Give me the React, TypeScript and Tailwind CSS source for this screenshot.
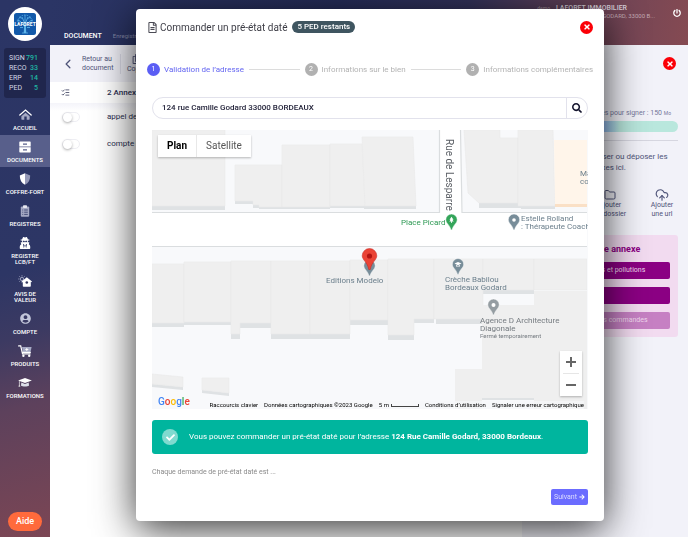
import type { ReactNode } from 'react'
import {
    FaArrowRight,
    FaCheck,
    FaPowerOff,
    FaRegCopy,
    FaRegFileAlt,
    FaSearch,
    FaTimes,
    FaUserCircle,
    FaUserSecret,
} from 'react-icons/fa'
import { ChevronLeft, CloudUpload, File, Folder, ListChecks } from 'lucide-react'

const stats = [
    { label: 'SIGN', value: 791 },
    { label: 'RECO', value: 33 },
    { label: 'ERP', value: 14 },
    { label: 'PED', value: 5 },
]

const menu: { label: string; icon: ReactNode; active?: boolean }[] = [
    { label: 'Accueil', icon: <HomeIcon /> },
    { label: 'Documents', icon: <DrawerIcon />, active: true },
    { label: 'Coffre-fort', icon: <ShieldIcon /> },
    { label: 'Registres', icon: <ClipboardIcon /> },
    { label: 'Registre LCB/FT', icon: <FaUserSecret className="size-3" /> },
    { label: 'Avis de valeur', icon: <HouseDayIcon /> },
    { label: 'Compte', icon: <FaUserCircle className="size-[11px] text-[#c3c6da]" /> },
    { label: 'Produits', icon: <CartIcon /> },
    { label: 'Formations', icon: <GraduationIcon /> },
]

const steps = ['Validation de l’adresse', 'Informations sur le bien', 'Informations complémentaires']

export default function App() {
    return (
        <div className="flex min-h-screen bg-white font-['Roboto',sans-serif] text-[#2b3052]">
            <Sidebar />
            <div className="flex min-w-0 flex-1 flex-col">
                <Header />
                <div className="flex flex-1">
                    <Annexes />
                    <UploadPanel />
                </div>
            </div>
            <OrderDialog />
        </div>
    )
}

function Sidebar() {
    return (
        <nav className="flex w-[50px] shrink-0 flex-col items-center bg-[linear-gradient(165deg,#2b3565_0%,#2d3665_50%,#3c3a62_62%,#5d415c_75%,#7c4654_100%)] pt-[7px] text-white">
            <Logo />
            <dl className="mt-[7px] w-[42px] rounded-[3px] bg-[#20264d] py-[5px] pr-2 pl-[5px] text-[7px] leading-[10px]">
                {stats.map((s) => (
                    <div key={s.label} className="flex justify-between">
                        <dt className="text-[#d5d7e5]">{s.label}</dt>
                        <dd className="font-medium text-[#1fb5a2]">{s.value}</dd>
                    </div>
                ))}
            </dl>
            <ul className="mt-[5px] w-full">
                {menu.map((item) => (
                    <li key={item.label}>
                        <a
                            href="#"
                            className={
                                'flex flex-col items-center gap-1 px-1 pt-[5px] pb-1 text-center text-[6px] leading-[6px] font-medium uppercase ' +
                                (item.active ? 'bg-[#585f8b]' : '')
                            }
                        >
                            <span className="flex h-[13px] items-center">{item.icon}</span>
                            <span className={item.label.includes(' ') ? 'w-8' : ''}>{item.label}</span>
                        </a>
                    </li>
                ))}
            </ul>
            <button className="mt-auto mb-[6px] h-[19px] w-[34px] rounded-full bg-[#ff6a3c] text-[9px] font-medium">
                Aide
            </button>
        </nav>
    )
}

function Header() {
    return (
        <header className="flex h-[45px] shrink-0 justify-between bg-[linear-gradient(100deg,#2b3565_0%,#262d5a_45%,#33335c_65%,#6d4458_84%,#854a52_100%)] pr-[7px] pl-[14px] text-white">
            <div className="flex items-end gap-[11px] pb-1">
                <h1 className="text-[7px] leading-[10px] font-medium">DOCUMENT</h1>
                <span className="text-[6px] leading-[10px] text-[#8286a5]">Enregistré</span>
            </div>
            <div className="flex gap-[18px] pt-[5px]">
                <div className="text-right text-[7px] leading-[7px]">
                    <p className="pr-7 font-medium text-[#d9d3dd]">
                        <span className="mr-[6px] text-[5px] text-[#9c8796]">demo</span>
                        LAFORET IMMOBILIER
                    </p>
                    <p className="text-[6px] text-[#c3a9b3]">124 RUE CAMILLE GODARD, 33000 B...</p>
                </div>
                <button aria-label="Déconnexion" className="h-4">
                    <FaPowerOff className="size-2" />
                </button>
            </div>
        </header>
    )
}

function Annexes() {
    return (
        <main className="min-w-0 flex-1">
            <div className="flex h-[37px] items-center bg-[#f2f2f9] pl-3 text-[7px] leading-[9px] text-[#50557a]">
                <a href="#" className="flex items-center gap-2">
                    <ChevronLeft className="size-3 scale-125" strokeWidth={2} />
                    <span className="w-8">Retour au document</span>
                </a>
                <div className="mx-[6px] h-5 w-px bg-[#dcdce8]" />
                <button className="flex flex-col items-center gap-px">
                    <FaRegCopy className="size-[10px]" />
                    Copier
                </button>
            </div>
            <div className="flex h-[21px] items-center gap-[37px] pl-[11px]">
                <ListChecks className="size-[9px]" />
                <h2 className="text-[8px] font-medium">2 Annexes</h2>
            </div>
            <ul className="bg-linear-to-b from-[#f4f4fa] to-white to-15% text-[8px]">
                <AnnexRow label="appel de charges" />
                <AnnexRow label="compte rendu" />
            </ul>
        </main>
    )
}

function AnnexRow({ label }: { label: string }) {
    return (
        <li className="h-[27px] pl-3">
            <label className="flex h-full items-center gap-[27px]">
                <span className="flex h-[10px] w-[18px] rounded-full border border-[#eeeef3] bg-white">
                    <input
                        type="checkbox"
                        className="size-[9px] appearance-none rounded-full bg-white shadow-[0_1px_3px_#0005]"
                    />
                </span>
                {label}
            </label>
        </li>
    )
}

function UploadPanel() {
    return (
        <aside className="w-[166px] shrink-0 bg-[#f2f2f9] pt-3 pl-[10px] text-[#50557a]">
            <div className="flex justify-end pr-3">
                <CloseButton />
            </div>
            <p className="mt-[39px] pr-[17px] text-right text-[7px] leading-2 whitespace-nowrap text-[#74789a]">
                Taille des annexes pour signer : 150 <small className="text-[5px]">Mo</small>
            </p>
            <div className="pr-[10px]">
                <div className="mt-1 h-[11px] rounded-full bg-linear-to-r from-[#8fb3ff] from-45% to-[#b9e7dd] to-60%" />
                <hr className="mt-2 border-[#d6d6e0]" />
                <p className="mt-[10px] text-center text-[8px] leading-[11px]">
                    Vous pouvez glisser ou déposer les annexes ici.
                </p>
            </div>
            <div className="mt-[15px] grid grid-cols-3 text-[7px] leading-[9px]">
                <UploadButton icon={<File className="size-3" strokeWidth={1.5} />} target="un fichier" />
                <UploadButton icon={<Folder className="size-3" strokeWidth={2} />} target="un dossier" />
                <UploadButton icon={<CloudUpload className="size-[14px]" strokeWidth={2} />} target="une url" />
            </div>
            <section className="mt-4 mr-[10px] rounded-[3px] bg-[#f2dbf0] px-2 pt-[9px] pb-2 text-center">
                <h2 className="text-[9px] leading-[11px] font-bold text-[#8b0083]">Créer une annexe</h2>
                <div className="mt-[7px] flex flex-col gap-2 text-[7px] text-[#f0d9ef]">
                    <button className="h-[17px] rounded-xs bg-[#8b0083]">Etats risques et pollutions</button>
                    <button aria-label="Pré-état daté" className="h-[17px] rounded-xs bg-[#8b0083]" />
                    <button className="h-[17px] rounded-xs bg-[#c680c3]">Voir toutes les commandes</button>
                </div>
            </section>
        </aside>
    )
}

function UploadButton({ icon, target }: { icon: ReactNode; target: string }) {
    return (
        <button className="flex flex-col items-center">
            <span className="flex h-[13px] items-center">{icon}</span>
            <span className="whitespace-nowrap">
                Ajouter
                <br />
                {target}
            </span>
        </button>
    )
}

function CloseButton() {
    return (
        <button
            aria-label="Fermer"
            className="flex size-[13px] items-center justify-center rounded-full bg-[#fb0007] text-white"
        >
            <FaTimes className="size-[8px]" />
        </button>
    )
}

function OrderDialog() {
    return (
        <div className="fixed inset-y-0 right-0 left-[52px] flex items-start justify-center pt-[9px]">
            <div
                role="dialog"
                aria-labelledby="order-title"
                className="w-full max-w-[468px] rounded-[4px] bg-white pt-[11px] pb-4 shadow-[0_8px_40px_rgba(0,0,0,0.8)]"
            >
                <div className="flex h-[14px] items-center px-[11px]">
                    <FaRegFileAlt className="size-[11px] text-[#4b4b55]" />
                    <h2 id="order-title" className="ml-[2px] text-[10px] text-[#3d3d46]">
                        Commander un pré-état daté
                    </h2>
                    <span className="mr-auto ml-[5px] rounded-full bg-[#3f5560] px-[5px] text-[8px] leading-3 font-medium text-white">
                        5 PED restants
                    </span>
                    <CloseButton />
                </div>

                <ol className="mt-[29px] flex items-center gap-[5px] px-[11px] text-[8px]">
                    {steps.map((step, i) => (
                        <Step key={step} index={i} label={step} />
                    ))}
                </ol>

                <div className="px-4">
                    <form className="mt-[21px] flex h-[22px] rounded-full border border-[#e2e2ec]">
                        <input
                            aria-label="Adresse"
                            defaultValue="124 rue Camille Godard 33000 BORDEAUX"
                            className="min-w-0 flex-1 px-[9px] text-[8px] font-medium text-[#23233a] outline-none"
                        />
                        <button
                            type="button"
                            aria-label="Rechercher"
                            className="flex w-[21px] items-center justify-center border-l border-[#e2e2ec] text-[#15152e]"
                        >
                            <FaSearch className="size-[10px]" />
                        </button>
                    </form>

                    <StreetMap />

                    <div className="mt-[11px] flex h-[34px] items-center gap-[11px] rounded-[3px] bg-[#00b59e] px-[10px] text-[8px] text-white">
                        <span className="flex size-4 items-center justify-center rounded-full bg-[#80dacf]">
                            <FaCheck className="size-[9px]" />
                        </span>
                        <p>
                            Vous pouvez commander un pré-état daté pour l’adresse{' '}
                            <strong>124 Rue Camille Godard, 33000 Bordeaux</strong>.
                        </p>
                    </div>

                    <p className="mt-[14px] text-[7px] leading-2 text-[#8a8a8a]">
                        Chaque demande de pré-état daté est ...
                    </p>
                    <div className="mt-[13px] flex justify-end">
                        <button className="flex h-4 items-center gap-[2px] rounded-xs bg-[#6b6cff] px-[3px] text-[7px] text-[#dcdcff]">
                            Suivant <FaArrowRight className="size-[6px] text-white" />
                        </button>
                    </div>
                </div>
            </div>
        </div>
    )
}

function Step({ index, label }: { index: number; label: string }) {
    const active = index === 0
    return (
        <>
            {index > 0 && <li aria-hidden className="h-px flex-1 bg-[#dcdcdc]" />}
            <li className={'flex items-center gap-1 ' + (active ? 'text-[#6466f1]' : 'text-[#b3b3b3]')}>
                <span
                    className={
                        'flex size-[13px] items-center justify-center rounded-full text-[7px] text-white ' +
                        (active ? 'bg-[#5b5ef4]' : 'bg-[#b1b1b1]')
                    }
                >
                    {index + 1}
                </span>
                {label}
            </li>
        </>
    )
}

/* Map */

function StreetMap() {
    return (
        <div className="relative mt-[11px] h-[279px] overflow-hidden bg-[#f8f9fb] text-[8px] leading-2 text-[#6b7f8c]">
            <MapShapes />

            <span className="absolute top-[9px] left-[292px] text-[10px] leading-[10px] text-[#5c6066] [writing-mode:vertical-rl]">
                Rue de Lesparre
            </span>
            <span className="absolute top-[40px] left-[428px]">
                Maison
                <br />
                connectée
            </span>
            <span className="absolute top-[89px] left-[249px] text-[#2f9a55]">Place Picard</span>
            <span className="absolute top-[85px] left-[369px] whitespace-nowrap">
                Estelle Rolland
                <br />: Thérapeute Coach
            </span>
            <span className="absolute top-[147px] left-[174px]">Editions Modelo</span>
            <span className="absolute top-[146px] left-[293px] whitespace-nowrap">
                Crèche Babilou
                <br />
                Bordeaux Godard
            </span>
            <span className="absolute top-[187px] left-[328px] whitespace-nowrap text-[#757b80]">
                Agence D Architecture
                <br />
                Diagonale
                <br />
                <small className="block text-[6px] leading-[6px]">Fermé temporairement</small>
            </span>

            <div className="absolute top-[5px] left-[6px] flex h-[22px] bg-white text-[10px] shadow-[0_1px_2px_#0004]">
                <button className="border-r border-[#e8e8e8] px-[9px] font-bold text-black">Plan</button>
                <button className="px-[9px] text-[#565656]">Satellite</button>
            </div>

            <div className="absolute right-[6px] bottom-[13px] flex w-[22px] flex-col items-center bg-white text-[#666] shadow-[0_1px_2px_#0004]">
                <button aria-label="Zoom avant" className="flex h-[22px] items-center">
                    <svg viewBox="0 0 10 10" className="size-[10px]">
                        <path d="M0 5h10M5 0v10" stroke="currentColor" strokeWidth="2" />
                    </svg>
                </button>
                <div className="h-px w-4 bg-[#e6e6e6]" />
                <button aria-label="Zoom arrière" className="flex h-[22px] items-center">
                    <svg viewBox="0 0 10 10" className="size-[10px]">
                        <path d="M0 5h10" stroke="currentColor" strokeWidth="2" />
                    </svg>
                </button>
            </div>

            <div className="absolute bottom-[1px] left-[6px] text-[10px] leading-3 font-medium">
                <span className="text-[#4285f4]">G</span>
                <span className="text-[#ea4335]">o</span>
                <span className="text-[#fbbc05]">o</span>
                <span className="text-[#4285f4]">g</span>
                <span className="text-[#34a853]">l</span>
                <span className="text-[#ea4335]">e</span>
            </div>
            <div className="absolute right-1 bottom-0 flex gap-[6px] bg-[#f7f8f9]/70 text-[6px] whitespace-nowrap text-black">
                <button>Raccourcis clavier</button>
                <span>Données cartographiques ©2023 Google</span>
                <span className="flex items-center gap-[2px]">
                    5 m <span className="h-[3px] w-7 border border-t-0 border-[#444]" />
                </span>
                <a href="#">Conditions d’utilisation</a>
                <a href="#">Signaler une erreur cartographique</a>
            </div>
        </div>
    )
}

function MapShapes() {
    return (
        <svg width="435" height="279" viewBox="0 0 435 279" className="absolute top-0 left-0">
            {/* walls */}
            <g fill="#dfe2e4">
                <path d="M0 76h73v4H0zM83 71h18v3H83zM101 75h6v3h-6zM107 77h71v2h-71zM178 76h34v2h-34zM212 76h52v3h-52z" />
                <path d="M327 73h42v5h-42zM369 76h34v3h-34z" />
                <path d="M0 193h32v4H0zM32 192h47v3H32zM79 204h9v5h-9zM88 193h31v5H88zM119 204h79v5h-79zM198 190h38v5h-38zM236 205h26v5h-26zM262 189h20v4h-20zM284 189h47v5h-47zM331 160h51v4h-51zM330 268h52v2h-52z" />
                <path d="M0 254l31 3v3L0 257zM50 260l27 3v3l-27-3z" />
            </g>
            {/* buildings */}
            <g fill="#efefef" stroke="#e9eaea" strokeWidth="0.6">
                <path d="M0 0h73v76H0zM83 35h47v42h-23v-2h-6v-4H83zM130 15h48v62h-48zM178 14h32l3 62h-35z" />
                <path d="M210 7h51l3 69h-51z" />
                <path d="M312 0h36v8h18v65h-39l-11-10zM366 0h35l2 76h-37z" />
                <path d="M0 134h32v59H0zM32 132h47v60H32zM79 131h40v62H88v11h-9zM119 131h39v73h-39zM158 131h40v73h-40zM198 130h38v60h-38z" />
                <path d="M236 129h46v60h-20v16h-26zM282 129h49v60h-49zM331 129h51v31h-51zM382 129h53v31h-53z" />
                <path d="M0 244l31 3v10L0 254zM50 248h27v15l-27-3z" />
            </g>
            <path d="M382 161h53v118h-53v-11h-52v11h-27v-40h27v-64h52z" fill="#efefef" />
            <path d="M402 10h33v64h-32z" fill="#fff5ea" />
            <path d="M403 74h32v3h-32z" fill="#fae0c6" />
            {/* roads */}
            <path d="M0 82.5h435v34H0zM287.5 0h21l2 83h-23z" fill="#fff" />
            <path d="M0 82.5h287.5V0M308.5 0l1.5 82.5H435M0 116.5h435" fill="none" stroke="#dadddf" strokeWidth="1.2" />
            <MapPin x={299.5} y={90} color="#34a55a">
                <path d="M0-3.2l2 3H-2zM0-1.5l2.2 3H-2.2zM-.4 1h.8v2h-.8z" fill="#fff" />
            </MapPin>
            <MapPin x={362} y={90} color="#788d99">
                <circle r="1.8" fill="#fff" />
            </MapPin>
            <MapPin x={217.5} y={136} color="#788d99" />
            <MapPin x={306} y={134.5} color="#788d99">
                <path d="M0-2.5L3.5-1 0 .8-3.5-1zM-2 .5L0 1.6 2 .5V2H-2z" fill="#fff" />
            </MapPin>
            <MapPin x={341.5} y={175} color="#959da2">
                <circle r="2" fill="#fff" />
            </MapPin>
            <g transform="translate(217.5 126)">
                <path
                    d="M0-7.5a7.3 7.3 0 0 1 7.3 7.3C7.3 4 2 6 .8 13.5h-1.6C-2 6-7.3 4-7.3-.2A7.3 7.3 0 0 1 0-7.5z"
                    fill="#ea4335"
                    stroke="#c5221f"
                    strokeWidth="0.5"
                />
                <circle r="2.6" fill="#b31412" />
            </g>
        </svg>
    )
}

function MapPin({ x, y, color, children }: { x: number; y: number; color: string; children?: ReactNode }) {
    return (
        <g transform={`translate(${x} ${y})`}>
            <path
                d="M0-6a5.7 5.7 0 0 1 5.7 5.7C5.7 3.5 1.8 4.5.5 10h-1C-1.8 4.5-5.7 3.5-5.7-.3A5.7 5.7 0 0 1 0-6z"
                fill={color}
                stroke="#fff"
                strokeWidth="0.5"
            />
            {children}
        </g>
    )
}

/* Icons */

function Logo() {
    return (
        <a
            href="#"
            aria-label="Laforêt"
            className="flex size-[34px] shrink-0 items-center justify-center rounded-full bg-white"
        >
            <svg viewBox="0 0 22 22" className="size-[22px]">
                <rect width="22" height="22" rx="2.5" fill="#1259a9" />
                <g fill="none" stroke="#5fb6ea" strokeWidth="0.8">
                    <path d="M11 20V9M11 14L6 8M11 14l5-6M11 11L8 4M11 11l3-7M6 8L3 7M16 8l3-1M8.5 5.5L5 4M13.5 5.5L17 4M11 9V2" />
                    <path d="M4 9a7 7 0 0 1 14 0" strokeDasharray="1.5 1" />
                    <path d="M6 14.5h3M13 14.5h3M8 20h6" />
                </g>
                <path d="M10.2 13h1.6l.5 7H9.7z" fill="#5fb6ea" />
                <text
                    x="11"
                    y="13"
                    textAnchor="middle"
                    fontSize="5"
                    fontWeight="700"
                    fill="#fff"
                    fontFamily="Roboto, sans-serif"
                >
                    LAFORET
                </text>
            </svg>
        </a>
    )
}

function HomeIcon() {
    return (
        <svg viewBox="0 0 14 12" className="h-[11px] w-[13px]">
            <path d="M7 4l4.5 3.8V11a.6.6 0 0 1-.6.6H8.3V8.3H5.7v3.3H3.1a.6.6 0 0 1-.6-.6V7.8z" fill="#a5a9c4" />
            <path d="M.8 6.5L7 1.2l6.2 5.3" fill="none" stroke="#fff" strokeWidth="1.4" strokeLinecap="round" />
        </svg>
    )
}

function DrawerIcon() {
    return (
        <svg viewBox="0 0 12 12" className="size-3">
            <path d="M1 .5h10a.7.7 0 0 1 .7.7v4.3H.3V1.2A.7.7 0 0 1 1 .5z" fill="#fff" />
            <path d="M.3 6.3h11.4v4.5a.7.7 0 0 1-.7.7H1a.7.7 0 0 1-.7-.7z" fill="#fff" />
            <path d="M4 2.5h4v1.2H4zM4 8.2h4v1.2H4z" fill="#585f8b" />
        </svg>
    )
}

function ShieldIcon() {
    return (
        <svg viewBox="0 0 12 12" className="size-3">
            <path d="M6 .3L.8 2.4c0 4.3 1.7 7.7 5.2 9.4z" fill="#fff" />
            <path d="M6 .3l5.2 2.1c0 4.3-1.7 7.7-5.2 9.4z" fill="#9599b8" />
        </svg>
    )
}

function ClipboardIcon() {
    return (
        <svg viewBox="0 0 10 12" className="h-3 w-[10px]">
            <rect x="0.8" y="1.5" width="8.4" height="10.2" rx="1" fill="#a5a9c4" />
            <rect x="3" y="0.3" width="4" height="2.7" rx="0.8" fill="#e6e7f0" />
            <path
                d="M2.3 5h.9M4.2 5h3.6M2.3 7.2h.9M4.2 7.2h3.6M2.3 9.4h.9M4.2 9.4h3.6"
                stroke="#2d3665"
                strokeWidth="0.8"
            />
        </svg>
    )
}

function HouseDayIcon() {
    return (
        <svg viewBox="0 0 14 12" className="h-3 w-[14px]">
            <g stroke="#a5a9c4" strokeWidth="0.9" fill="none">
                <circle cx="4" cy="4" r="1.6" />
                <path d="M4 .3v1.2M4 6.5v1.2M.3 4h1.2M1.4 1.4l.9.9M6.6 1.4l-.9.9M1.4 6.6l.9-.9" />
            </g>
            <path
                d="M8.8 2.3L14 6.5l-.6.7-.6-.4V11a.7.7 0 0 1-.7.7H5.5a.7.7 0 0 1-.7-.7V6.8l-.6.4-.6-.7z"
                fill="#fff"
            />
            <circle cx="8.8" cy="7.5" r="1.3" fill="#33375f" />
        </svg>
    )
}

function CartIcon() {
    return (
        <svg viewBox="0 0 14 12" className="h-3 w-[14px]">
            <path d="M4 2h9.6l-1.2 5.4H5z" fill="#a5a9c4" />
            <path d="M.6.9h2.1l1.8 8h7.6M4.3 7.4h8" fill="none" stroke="#fff" strokeWidth="1.2" strokeLinecap="round" />
            <circle cx="5.4" cy="10.7" r="1.2" fill="#fff" />
            <circle cx="11.2" cy="10.7" r="1.2" fill="#fff" />
            <path d="M8.8 3v3M7.3 4.5h3" stroke="#fff" strokeWidth="0.9" />
        </svg>
    )
}

function GraduationIcon() {
    return (
        <svg viewBox="0 0 15 12" className="h-[11px] w-[14px]">
            <path d="M7.5 1L15 3.8 7.5 6.6 0 3.8z" fill="#fff" />
            <path d="M3.5 6l4 1.5 4-1.5.4 3.2c-1.5 1.6-7.3 1.6-8.8 0z" fill="#dddfe9" />
            <path d="M1.4 4.5v4.5M.8 10.3l.6-1.5.6 1.5z" stroke="#fff" strokeWidth="0.7" />
        </svg>
    )
}
